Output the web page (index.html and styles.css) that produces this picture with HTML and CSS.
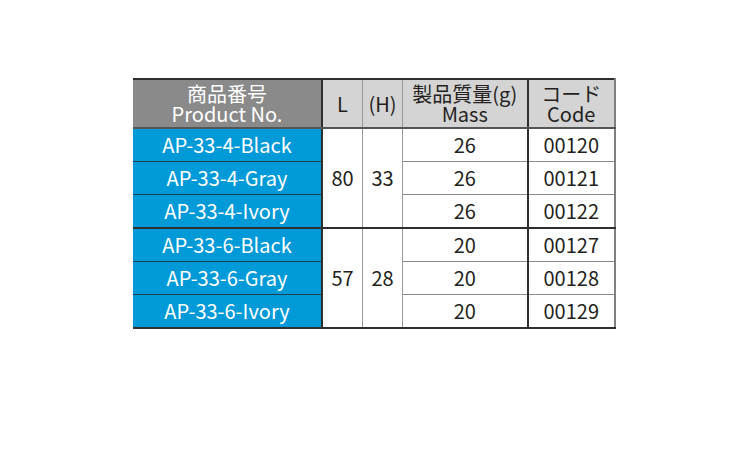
FILE: index.html
```html
<!DOCTYPE html>
<html lang="ja">
<head>
<meta charset="utf-8">
<link rel="stylesheet" href="styles.css">
</head>
<body>
<table class="spec">
  <thead>
    <tr class="head">
      <th class="c-prod">商品番号<br>Product No.</th>
      <th class="c-l">L</th>
      <th class="c-h">(H)</th>
      <th class="c-mass">製品質量(g)<br>Mass</th>
      <th class="c-code">コード<br>Code</th>
    </tr>
  </thead>
  <tbody>
    <tr>
      <td class="c-prod">AP-33-4-Black</td>
      <td class="c-l" rowspan="3">80</td>
      <td class="c-h" rowspan="3">33</td>
      <td class="c-mass">26</td>
      <td class="c-code">00120</td>
    </tr>
    <tr>
      <td class="c-prod">AP-33-4-Gray</td>
      <td class="c-mass">26</td>
      <td class="c-code">00121</td>
    </tr>
    <tr class="group-end">
      <td class="c-prod">AP-33-4-Ivory</td>
      <td class="c-mass">26</td>
      <td class="c-code">00122</td>
    </tr>
    <tr>
      <td class="c-prod">AP-33-6-Black</td>
      <td class="c-l" rowspan="3">57</td>
      <td class="c-h" rowspan="3">28</td>
      <td class="c-mass">20</td>
      <td class="c-code">00127</td>
    </tr>
    <tr>
      <td class="c-prod">AP-33-6-Gray</td>
      <td class="c-mass">20</td>
      <td class="c-code">00128</td>
    </tr>
    <tr>
      <td class="c-prod">AP-33-6-Ivory</td>
      <td class="c-mass">20</td>
      <td class="c-code">00129</td>
    </tr>
  </tbody>
</table>
</body>
</html>
```
FILE: styles.css
```css
html, body {
  margin: 0;
  padding: 0;
  background: #ffffff;
}

body {
  padding: 78px 0 0 133px;
  font-family: "Noto Sans CJK JP", "Noto Sans", sans-serif;
  color: #231f20;
}

.spec {
  border-collapse: collapse;
  border-top: 2px solid #2f2f2f;
  border-bottom: 2px solid #2f2f2f;
  border-right: 2px solid #808080;
}

.spec th,
.spec td {
  padding: 0;
  text-align: center;
  vertical-align: middle;
  font-size: 20px;
  line-height: 20px;
  font-weight: normal;
  white-space: nowrap;
}

.spec .c-prod { width: 188px; }
.spec .c-l { width: 39px; }
.spec .c-h { width: 39px; }
.spec .c-mass { width: 123.5px; }
.spec .c-code { width: 85.5px; }

.head th {
  height: 47px;
  background: #d4d4d4;
  border-bottom: 2px solid #555555;
  border-right: 1px solid #9a9a9a;
}

.head th.c-prod {
  background: #8a8a8a;
  color: #ffffff;
  border-right: 2px solid #2f2f2f;
}

.head th.c-mass {
  border-right: 2px solid #2f2f2f;
}

.head th.c-code {
  border-right: 2px solid #808080;
}

tbody td {
  height: 32px;
  border-bottom: 1px solid #8a8a8a;
}

tbody td.c-prod {
  background: #009ad8;
  color: #ffffff;
  border-right: 2px solid #2f2f2f;
  border-bottom: 1px solid #24404f;
}

tbody td.c-l,
tbody td.c-h {
  border-right: 1px solid #9a9a9a;
}

tbody td.c-mass {
  border-right: 2px solid #2f2f2f;
}

tbody tr.group-end td,
tbody td.c-l,
tbody td.c-h {
  border-bottom: 2px solid #2f2f2f;
}

tbody tr:last-child td {
  border-bottom: 2px solid #2f2f2f;
}
```
